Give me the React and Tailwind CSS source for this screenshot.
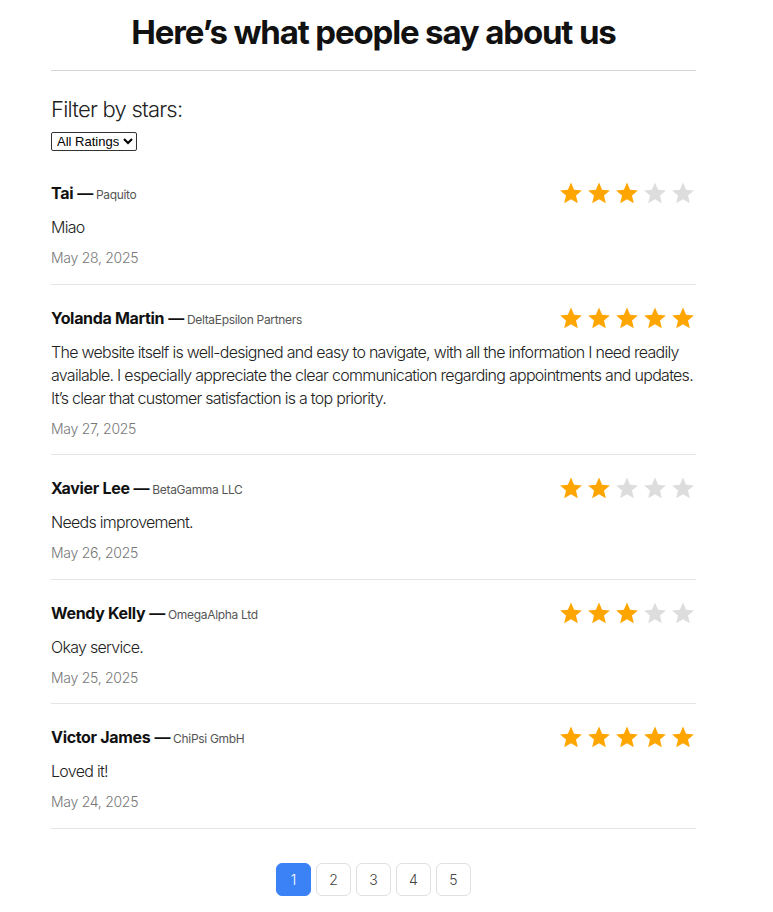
import React, { useState } from 'react';

const reviews = [
  { name: 'Tai', company: 'Paquito', rating: 3, text: 'Miao', date: 'May 28, 2025' },
  {
    name: 'Yolanda Martin',
    company: 'DeltaEpsilon Partners',
    rating: 5,
    text: 'The website itself is well-designed and easy to navigate, with all the information I need readily available. I especially appreciate the clear communication regarding appointments and updates. It’s clear that customer satisfaction is a top priority.',
    date: 'May 27, 2025',
  },
  { name: 'Xavier Lee', company: 'BetaGamma LLC', rating: 2, text: 'Needs improvement.', date: 'May 26, 2025' },
  { name: 'Wendy Kelly', company: 'OmegaAlpha Ltd', rating: 3, text: 'Okay service.', date: 'May 25, 2025' },
  { name: 'Victor James', company: 'ChiPsi GmbH', rating: 5, text: 'Loved it!', date: 'May 24, 2025' },
];

function Star({ filled }) {
  return (
    <svg width="24" height="24" viewBox="0 0 24 24" className={filled ? 'fill-[#ffa500]' : 'fill-[#dddddd]'}>
      <path d="M12 1.5l3.1 7.2 7.8.7-5.9 5.2 1.8 7.7L12 18.3l-6.8 4 1.8-7.7L1.1 9.4l7.8-.7z" />
    </svg>
  );
}

export default function App() {
  const [filter, setFilter] = useState('all');
  const [page, setPage] = useState(1);

  return (
    <div className="min-h-screen bg-white font-['Inter',sans-serif] text-[#111]">
      <div className="ml-[51px] w-[645px] pt-[12px]">
        {/* Header */}
        <h1 className="text-center text-[33px] leading-[40px] font-bold tracking-[-0.035em] text-[#111] pb-[18px] border-b border-[#d4d4d4]">
          Here’s what people say about us
        </h1>

        {/* Filter */}
        <div className="mt-[24px]">
          <h2 className="text-[22px] leading-[28px] font-light tracking-[-0.035em] text-[#222]">Filter by stars:</h2>
          <select
            value={filter}
            onChange={e => setFilter(e.target.value)}
            className="mt-[9px] w-[86px] h-[19px] border border-[#333] rounded-[2px] bg-white text-[13px] leading-[15px] font-['Liberation_Sans',sans-serif] text-black px-[1px]"
          >
            <option value="all">All Ratings</option>
            <option value="5">5 Stars</option>
            <option value="4">4 Stars</option>
            <option value="3">3 Stars</option>
            <option value="2">2 Stars</option>
            <option value="1">1 Star</option>
          </select>
        </div>

        {/* Reviews */}
        <div className="mt-[8px]">
          {reviews.map((r, i) => (
            <div key={i} className="pt-[19px] pb-[15.5px] border-b border-[#e5e5e5]">
              <div className="flex items-center justify-between h-[28px]">
                <div className="flex items-baseline tracking-[-0.02em]">
                  <span className="text-[16px] font-bold text-[#111]">{r.name}</span>
                  <span className="text-[16px] font-bold text-[#111] ml-[4px]">—</span>
                  <span className="text-[12px] text-[#555] ml-[3px]">{r.company}</span>
                </div>
                <div className="flex gap-[4px] mr-[1px]">
                  {[1, 2, 3, 4, 5].map(n => (
                    <Star key={n} filled={n <= r.rating} />
                  ))}
                </div>
              </div>
              <p className="mt-[9px] text-[16px] leading-[23px] font-light tracking-[-0.045em] text-[#222]">{r.text}</p>
              <p className="mt-[9px] text-[14px] leading-[20px] font-light tracking-[-0.02em] text-[#777]">{r.date}</p>
            </div>
          ))}
        </div>

        {/* Pagination */}
        <div className="mt-[34px] flex justify-center gap-[5px] pb-[18px]">
          {[1, 2, 3, 4, 5].map(n => (
            <button
              key={n}
              onClick={() => setPage(n)}
              className={
                n === page
                  ? 'w-[35px] h-[33px] rounded-[6px] border border-[#3b82f6] bg-[#3b82f6] text-white text-[14px] font-light'
                  : 'w-[35px] h-[33px] rounded-[6px] border border-[#e0e0e0] bg-white text-[#444] text-[14px] font-light'
              }
            >
              {n}
            </button>
          ))}
        </div>
      </div>
    </div>
  );
}
